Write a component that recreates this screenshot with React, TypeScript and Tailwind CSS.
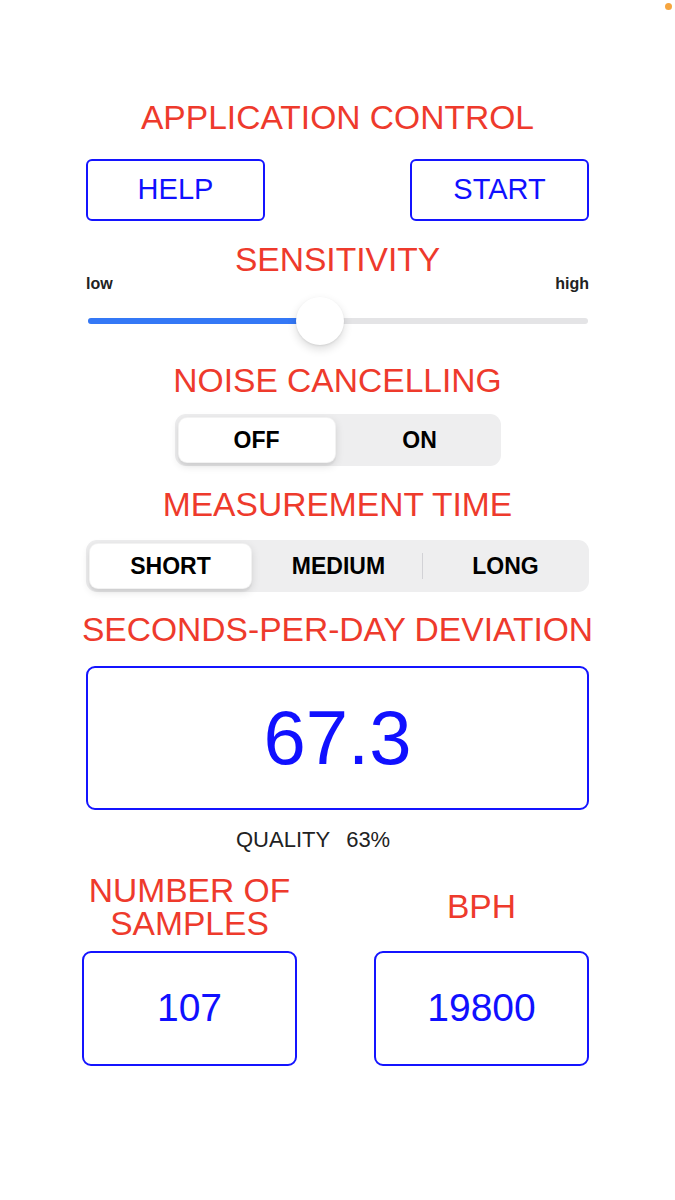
import type { ReactNode } from "react";

const RED = "text-[#ee3a2c]";

function Heading({ children, className = "" }: { children: ReactNode; className?: string }) {
	return (
		<h2
			className={`-mx-[40px] h-9 whitespace-nowrap text-center text-[33.6px] font-normal leading-9 ${RED} ${className}`}
		>
			{children}
		</h2>
	);
}

function OutlineButton({ label }: { label: string }) {
	return (
		<button className="flex h-[62px] w-[179px] items-center justify-center rounded-[6px] border-2 border-[#1414ff] text-[29px] text-[#1010ff]">
			{label}
		</button>
	);
}

function SelectedPill({ label }: { label: string }) {
	return (
		<div className="flex flex-1 items-center justify-center rounded-[9px] border border-black/5 bg-white shadow-[0_3px_8px_rgba(0,0,0,0.12),0_3px_1px_rgba(0,0,0,0.04)]">
			{label}
		</div>
	);
}

function Segment({ label }: { label: string }) {
	return <div className="flex flex-1 items-center justify-center">{label}</div>;
}

export default function App() {
	return (
		<div className="relative min-h-[1200px] w-full bg-white font-['Liberation_Sans',Arial,sans-serif]">
			{/* status indicator dot */}
			<span className="absolute right-[3px] top-[3px] h-[7px] w-[7px] rounded-full bg-[#f6a53f]" />

			<div className="flex flex-col px-[86px] pt-[100px]">
				<Heading>APPLICATION CONTROL</Heading>

				<div className="mt-[23px] flex justify-between">
					<OutlineButton label="HELP" />
					<OutlineButton label="START" />
				</div>

				<Heading className="mt-[21px]">SENSITIVITY</Heading>
				<div className="-mt-[2px] flex justify-between text-[16px] font-bold leading-4 text-[#222]">
					<span>low</span>
					<span>high</span>
				</div>

				{/* slider */}
				<div className="relative ml-[2px] mr-[1px] mt-[5px] flex h-12 items-center">
					<div className="h-[6px] w-full rounded-full bg-[#e4e4e6]">
						<div className="h-full w-[232px] rounded-full bg-[#3478f6]" />
					</div>
					<div className="absolute left-[208px] top-0 h-12 w-12 rounded-full bg-white shadow-[0_4px_10px_rgba(0,0,0,0.14),0_1px_2px_rgba(0,0,0,0.08)]" />
				</div>

				<Heading className="mt-[18px]">NOISE CANCELLING</Heading>
				<div className="mt-[15px] flex h-[52px] w-[326px] gap-[6px] self-center rounded-[11px] bg-[#eeeeef] p-[3px] text-[23px] font-bold text-black">
					<SelectedPill label="OFF" />
					<Segment label="ON" />
				</div>

				<Heading className="mt-[21px]">MEASUREMENT TIME</Heading>
				<div className="mt-[17px] flex h-[52px] w-full rounded-[11px] bg-[#eeeeef] p-[3px] text-[23px] font-bold text-black">
					<SelectedPill label="SHORT" />
					<div className="w-[6px]" />
					<Segment label="MEDIUM" />
					<div className="flex w-[6px] items-center justify-center">
						<div className="h-[26px] w-px bg-[#d2d2d6]" />
					</div>
					<Segment label="LONG" />
				</div>

				<Heading className="mt-[20px]">SECONDS-PER-DAY DEVIATION</Heading>
				<div className="mt-[18px] flex h-[144px] items-center justify-center rounded-[9px] border-2 border-[#1414ff] text-[76px] text-[#1010ff]">
					67.3
				</div>

				<div className="mt-[18px] flex gap-[16px] pl-[150px] text-[22px] leading-6 text-[#222]">
					<span>QUALITY</span>
					<span>63%</span>
				</div>

				<div className="-ml-[4px] mt-[22px] grid grid-cols-2 gap-x-[77px]">
					<div className="flex flex-col">
						<div className={`flex h-[66px] flex-col items-center justify-center text-center text-[33.6px] leading-[33px] ${RED}`}>
							<span>NUMBER OF</span>
							<span>SAMPLES</span>
						</div>
						<div className="mt-[11px] flex h-[115px] items-center justify-center rounded-[9px] border-2 border-[#1414ff] text-[39px] text-[#1010ff]">
							107
						</div>
					</div>
					<div className="flex flex-col">
						<div className={`flex h-[66px] items-center justify-center text-[33.6px] ${RED}`}>BPH</div>
						<div className="mt-[11px] flex h-[115px] items-center justify-center rounded-[9px] border-2 border-[#1414ff] text-[39px] text-[#1010ff]">
							19800
						</div>
					</div>
				</div>
			</div>
		</div>
	);
}
